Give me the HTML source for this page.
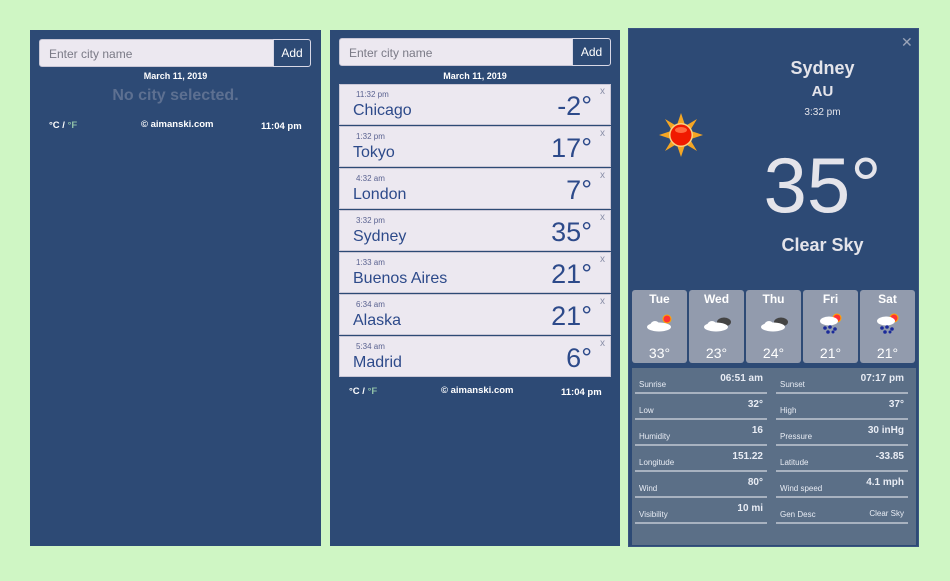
<!DOCTYPE html>
<html><head><meta charset="utf-8"><style>
*{box-sizing:border-box;margin:0;padding:0}
body{width:950px;height:581px;background:#cff6c4;position:relative;overflow:hidden;font-family:"Liberation Sans",sans-serif}
.p{position:absolute;background:#2d4a75}
.abs{position:absolute}
.inp{position:absolute;height:28px;background:#ece8f0;border:1px solid #c9c7d6;border-radius:3px 0 0 3px;font-size:12px;color:#7a7a86;padding:7px 9px}
.add{position:absolute;height:28px;border:1px solid #d8d8e6;border-radius:0 3px 3px 0;color:#fff;font-size:12px;text-align:center;line-height:26px;background:#2d4a75}
.wb{color:#fff;font-weight:bold;font-size:9.5px}
.card{position:absolute;left:339px;width:272px;height:41px;background:#ece8f0;border:1px solid #c9c7d6}
.card .t{position:absolute;left:16px;top:5px;font-size:8px;color:#5a6290}
.card .n{position:absolute;left:13px;top:17px;font-size:16px;color:#2d4a8a}
.card .d{position:absolute;right:18px;top:6px;font-size:27px;color:#2d4a8a}
.card .x{position:absolute;right:5px;top:1px;font-size:10px;color:#8a8fa8}
.fc{position:absolute;top:290px;width:55px;height:73px;background:#929bad;border-radius:3px;color:#fff;text-align:center;font-weight:bold}
.fc .dy{font-size:12px;margin-top:2px}
.fc svg{margin-top:6px}
.fc .tp{position:absolute;bottom:2px;width:100%;font-size:14px;font-weight:normal}
.row{position:absolute;width:132px;height:26px;border-bottom:2px solid #a8b2c0;color:#e8ecf4}
.row .l{position:absolute;left:4px;bottom:3px;font-size:8px}
.row .v{position:absolute;right:4px;bottom:8px;font-size:10px;font-weight:bold}
</style></head><body>
<div class="p" style="left:30px;top:30px;width:291px;height:516px">
</div>
<div class="inp" style="left:39px;top:39px;width:235px">Enter city name</div>
<div class="add" style="left:273px;top:39px;width:38px">Add</div>
<div class="abs wb" style="left:30px;width:291px;top:71px;text-align:center;font-size:9px">March 11, 2019</div>
<div class="abs" style="left:30px;width:291px;top:87px;text-align:center;font-size:16px;font-weight:bold;color:#5d7091">No city selected.</div>
<div class="abs wb" style="left:49px;top:120px">°C / <span style="color:#8fc0a8">°F</span></div>
<div class="abs wb" style="left:141px;top:119px">© aimanski.com</div>
<div class="abs wb" style="left:261px;top:121px">11:04 pm</div>

<div class="p" style="left:330px;top:30px;width:290px;height:516px"></div>
<div class="inp" style="left:339px;top:38px;width:234px">Enter city name</div>
<div class="add" style="left:572px;top:38px;width:39px">Add</div>
<div class="abs wb" style="left:330px;width:290px;top:71px;text-align:center;font-size:9px">March 11, 2019</div>
<div class="card" style="top:84px"><div class="t">11:32 pm</div><div class="n">Chicago</div><div class="d">-2°</div><div class="x">x</div></div>
<div class="card" style="top:126px"><div class="t">1:32 pm</div><div class="n">Tokyo</div><div class="d">17°</div><div class="x">x</div></div>
<div class="card" style="top:168px"><div class="t">4:32 am</div><div class="n">London</div><div class="d">7°</div><div class="x">x</div></div>
<div class="card" style="top:210px"><div class="t">3:32 pm</div><div class="n">Sydney</div><div class="d">35°</div><div class="x">x</div></div>
<div class="card" style="top:252px"><div class="t">1:33 am</div><div class="n">Buenos Aires</div><div class="d">21°</div><div class="x">x</div></div>
<div class="card" style="top:294px"><div class="t">6:34 am</div><div class="n">Alaska</div><div class="d">21°</div><div class="x">x</div></div>
<div class="card" style="top:336px"><div class="t">5:34 am</div><div class="n">Madrid</div><div class="d">6°</div><div class="x">x</div></div>
<div class="abs wb" style="left:349px;top:386px">°C / <span style="color:#8fc0a8">°F</span></div>
<div class="abs wb" style="left:441px;top:385px">© aimanski.com</div>
<div class="abs wb" style="left:561px;top:387px">11:04 pm</div>

<div class="p" style="left:628px;top:28px;width:291px;height:519px;border:1px solid #3a5580"></div>
<div class="abs" style="left:901px;top:34px;color:#9aa4b8;font-size:14px">✕</div>
<div class="abs" style="left:760px;width:125px;top:58px;text-align:center;color:#e4e4ea;font-weight:bold;font-size:18px">Sydney</div>
<div class="abs" style="left:760px;width:125px;top:83px;text-align:center;color:#e4e4ea;font-weight:bold;font-size:15px">AU</div>
<div class="abs" style="left:760px;width:125px;top:107px;text-align:center;color:#e4e4ea;font-size:10px">3:32 pm</div>
<div class="abs" style="left:760px;width:125px;top:140px;text-align:center;color:#e4e4ea;font-size:78px;line-height:90px">35°</div>
<div class="abs" style="left:760px;width:125px;top:235px;text-align:center;color:#e4e4ea;font-weight:bold;font-size:18px">Clear Sky</div>
<svg class="abs" style="left:657px;top:111px" width="48" height="48" viewBox="0 0 48 48">
<g fill="#f5a623"><polygon points="24,2 28,14 20,14"/><polygon points="24,46 28,34 20,34"/><polygon points="2,24 14,20 14,28"/><polygon points="46,24 34,20 34,28"/><polygon points="8,8 18,14 14,18"/><polygon points="40,8 34,18 30,14"/><polygon points="8,40 14,30 18,34"/><polygon points="40,40 30,34 34,30"/></g>
<circle cx="24" cy="24" r="12" fill="#f8d080"/><circle cx="24" cy="24" r="10.5" fill="#f01a00"/><ellipse cx="24" cy="19" rx="6" ry="3" fill="#ff6a40"/></svg>

<div class="fc" style="left:632px"><div class="dy">Tue</div><svg width="30" height="22"><circle cx="22" cy="7" r="4" fill="#f33" stroke="#fa0"/><ellipse cx="10" cy="14" rx="5" ry="5" fill="#fff"/><ellipse cx="14" cy="15" rx="12" ry="4.5" fill="#fff"/></svg><div class="tp">33°</div></div>
<div class="fc" style="left:689px"><div class="dy">Wed</div><svg width="30" height="22"><ellipse cx="22" cy="10" rx="7" ry="4.5" fill="#444"/><ellipse cx="10" cy="14" rx="5" ry="5" fill="#fff"/><ellipse cx="14" cy="15" rx="12" ry="4.5" fill="#fff"/></svg><div class="tp">23°</div></div>
<div class="fc" style="left:746px"><div class="dy">Thu</div><svg width="30" height="22"><ellipse cx="22" cy="10" rx="7" ry="4.5" fill="#444"/><ellipse cx="10" cy="14" rx="5" ry="5" fill="#fff"/><ellipse cx="14" cy="15" rx="12" ry="4.5" fill="#fff"/></svg><div class="tp">24°</div></div>
<div class="fc" style="left:803px"><div class="dy">Fri</div><svg width="30" height="22"><circle cx="21" cy="6" r="4" fill="#f33" stroke="#fa0"/><ellipse cx="13" cy="9" rx="9" ry="4.5" fill="#fff"/><g fill="#1a2a9a"><circle cx="9" cy="16" r="1.8"/><circle cx="14" cy="15" r="1.8"/><circle cx="19" cy="17" r="1.8"/><circle cx="12" cy="20" r="1.8"/><circle cx="17" cy="20" r="1.5"/></g></svg><div class="tp">21°</div></div>
<div class="fc" style="left:860px"><div class="dy">Sat</div><svg width="30" height="22"><circle cx="21" cy="6" r="4" fill="#f33" stroke="#fa0"/><ellipse cx="13" cy="9" rx="9" ry="4.5" fill="#fff"/><g fill="#1a2a9a"><circle cx="9" cy="16" r="1.8"/><circle cx="14" cy="15" r="1.8"/><circle cx="19" cy="17" r="1.8"/><circle cx="12" cy="20" r="1.8"/><circle cx="17" cy="20" r="1.5"/></g></svg><div class="tp">21°</div></div>

<div class="abs" style="left:632px;top:368px;width:284px;height:177px;background:#5b6f87"></div>
<div class="row" style="left:635px;top:368px"><span class="l">Sunrise</span><span class="v">06:51 am</span></div>
<div class="row" style="left:776px;top:368px"><span class="l">Sunset</span><span class="v">07:17 pm</span></div>
<div class="row" style="left:635px;top:394px"><span class="l">Low</span><span class="v">32°</span></div>
<div class="row" style="left:776px;top:394px"><span class="l">High</span><span class="v">37°</span></div>
<div class="row" style="left:635px;top:420px"><span class="l">Humidity</span><span class="v">16</span></div>
<div class="row" style="left:776px;top:420px"><span class="l">Pressure</span><span class="v">30 inHg</span></div>
<div class="row" style="left:635px;top:446px"><span class="l">Longitude</span><span class="v">151.22</span></div>
<div class="row" style="left:776px;top:446px"><span class="l">Latitude</span><span class="v">-33.85</span></div>
<div class="row" style="left:635px;top:472px"><span class="l">Wind</span><span class="v">80°</span></div>
<div class="row" style="left:776px;top:472px"><span class="l">Wind speed</span><span class="v">4.1 mph</span></div>
<div class="row" style="left:635px;top:498px"><span class="l">Visibility</span><span class="v">10 mi</span></div>
<div class="row" style="left:776px;top:498px"><span class="l">Gen Desc</span><span class="v" style="font-weight:normal;font-size:8px;bottom:4px">Clear Sky</span></div>
</body></html>
